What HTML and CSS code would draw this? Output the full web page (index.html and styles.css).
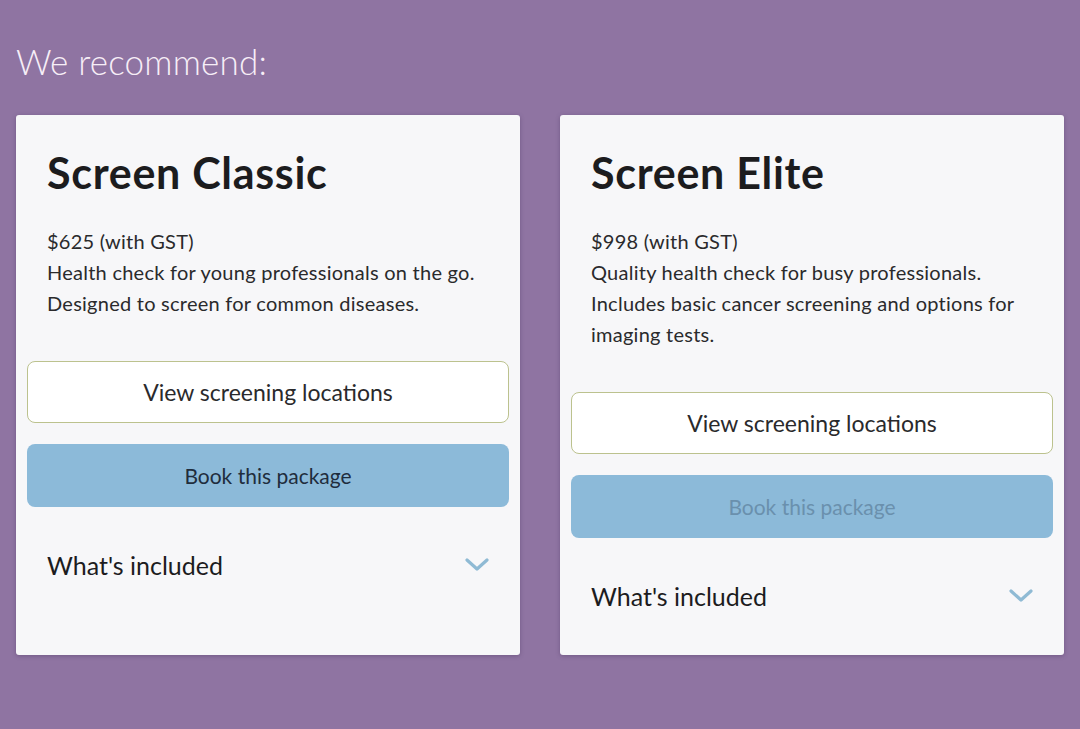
FILE: index.html
```
<!DOCTYPE html>
<html lang="en">
<head>
    <meta charset="UTF-8">
    <meta name="viewport" content="width=device-width, initial-scale=1.0">
    <title>Recommended packages</title>
    <link rel="stylesheet" href="styles.css">
</head>
<body>
    <div class="page">
        <h1>We recommend:</h1>

        <div class="cards">
            <div class="card">
                <div class="info">
                    <h2>Screen Classic</h2>
                    <p>$625 (with GST)<br>
                    Health check for young professionals on the go.<br>
                    Designed to screen for common diseases.</p>
                </div>
                <button class="btn-outline">View screening locations</button>
                <button class="btn-book">Book this package</button>
                <div class="included">
                    <span>What's included</span>
                    <svg width="24" height="14" viewBox="0 0 24 14"><path d="M2 2 L12 11 L22 2" fill="none" stroke="#8fbad4" stroke-width="3.2" stroke-linecap="round" stroke-linejoin="round"/></svg>
                </div>
            </div>

            <div class="card">
                <div class="info">
                    <h2>Screen Elite</h2>
                    <p>$998 (with GST)<br>
                    Quality health check for busy professionals.<br>
                    Includes basic cancer screening and options for<br>
                    imaging tests.</p>
                </div>
                <button class="btn-outline">View screening locations</button>
                <button class="btn-book faded">Book this package</button>
                <div class="included">
                    <span>What's included</span>
                    <svg width="24" height="14" viewBox="0 0 24 14"><path d="M2 2 L12 11 L22 2" fill="none" stroke="#8fbad4" stroke-width="3.2" stroke-linecap="round" stroke-linejoin="round"/></svg>
                </div>
            </div>
        </div>
    </div>
</body>
</html>
```

FILE: styles.css
```
* {
    margin: 0;
    padding: 0;
    box-sizing: border-box;
}
body {
    background-color: #8f74a2;
    font-family: "Lato", "Open Sans", sans-serif;
    color: #1c1c1e;
}
.page {
    padding: 40px 16px;
}
h1 {
    font-size: 35px;
    font-weight: 300;
    color: #f7eef7;
    line-height: 42px;
    margin-bottom: 33px;
    letter-spacing: 0.2px;
}
.cards {
    display: grid;
    grid-template-columns: 504px 504px;
    column-gap: 40px;
}
.card {
    background-color: #f7f7f9;
    border-radius: 3px;
    box-shadow: 0 1px 4px rgba(60, 40, 80, 0.35);
    padding: 11px 11px 0;
    display: flex;
    flex-direction: column;
}
.info {
    padding: 0 20px;
}
.info h2 {
    font-size: 43px;
    font-weight: 700;
    line-height: 52px;
    margin-top: 21px;
    letter-spacing: 0.7px;
}
.info p {
    font-size: 20px;
    line-height: 31px;
    margin-top: 27px;
    color: #2a2a2c;
    letter-spacing: 0.25px;
}
.card button {
    display: block;
    width: 100%;
    font-family: inherit;
    border-radius: 8px;
    cursor: pointer;
}
.btn-outline {
    margin-top: 42px;
    height: 62px;
    background-color: #ffffff;
    border: 1px solid #bcc28e;
    font-size: 23px;
    color: #2a2a2c;
}
.btn-book {
    margin-top: 21px;
    height: 63px;
    background-color: #8cbad9;
    border: none;
    font-size: 21px;
    color: #1f2d3d;
}
.btn-book.faded {
    color: #6a90ad;
}
.included {
    display: flex;
    justify-content: space-between;
    align-items: center;
    padding: 43px 20px 44px;
    font-size: 25px;
    line-height: 30px;
}
```
